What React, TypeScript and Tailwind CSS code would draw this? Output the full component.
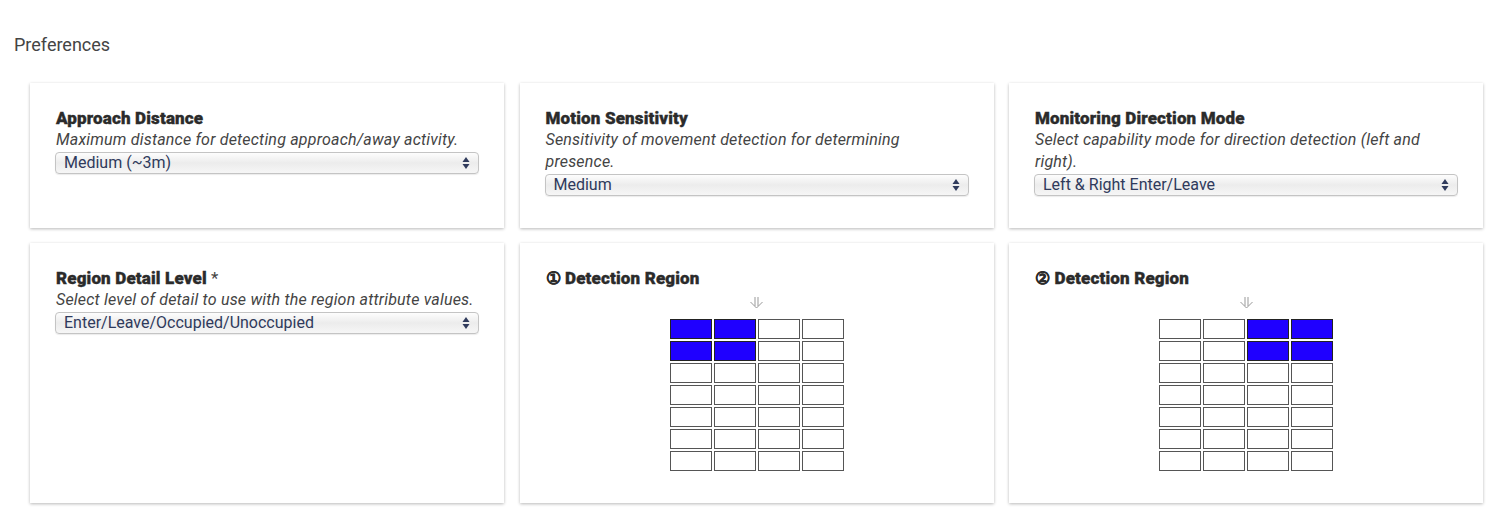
import React from "react";

const font = { fontFamily: "Roboto, 'Liberation Sans', sans-serif" };

function SelectBox({ value }: { value: string }) {
  return (
    <div className="relative mt-[1px] flex h-[22px] w-full items-center rounded-[4px] border border-[#c4c4c4] bg-gradient-to-b from-[#fdfdfd] via-[#ececec] to-[#f6f6f6] pl-[8px] text-[16px] leading-[20px] text-[#2f3a5c] shadow-[0_1px_1px_rgba(0,0,0,0.08)]">
      <span>{value}</span>
      <svg
        className="absolute right-[8px] top-1/2 -translate-y-1/2"
        width="8"
        height="13"
        viewBox="0 0 8 13"
      >
        <path d="M4 0.5 L7.5 5.5 L0.5 5.5 Z" fill="#2f3a5c" />
        <path d="M4 12.5 L7.5 7.5 L0.5 7.5 Z" fill="#2f3a5c" />
      </svg>
    </div>
  );
}

function Card({ children }: { children: React.ReactNode }) {
  return (
    <div className="bg-white pb-[32px] pl-[25px] pr-[25px] pt-[24px] shadow-[0_1px_3px_rgba(0,0,0,0.28)]">
      {children}
    </div>
  );
}

function Title({ children }: { children: React.ReactNode }) {
  return (
    <div className="pl-[1px] text-[17px] font-black leading-[22px] tracking-[0.15px] text-[#2b2b2b] [-webkit-text-stroke:0.35px_#2b2b2b]">
      {children}
    </div>
  );
}

function Desc({ children }: { children: React.ReactNode }) {
  return (
    <div className="pl-[1px] text-[16px] italic leading-[22px] tracking-[0.2px] text-[#444]">{children}</div>
  );
}

function PrefCard({ title, desc, value, req }: { title: string; desc: string; value: string; req?: boolean }) {
  return (
    <Card>
      <Title>
        {title}
        {req && <span className="font-normal text-[#444] [-webkit-text-stroke:0px]"> *</span>}
      </Title>
      <Desc>{desc}</Desc>
      <SelectBox value={value} />
    </Card>
  );
}

function RegionCard({ title, filled }: { title: string; filled: number[] }) {
  const cells = Array.from({ length: 28 }, (_, i) => i);
  return (
    <Card>
      <Title>{title}</Title>
      <div className="flex flex-col items-center">
        <svg className="mt-[8px]" width="15" height="12" viewBox="0 0 15 12">
          <path
            d="M6 0 V9 M9 0 V9 M1.5 5 L7.5 11 L13.5 5"
            fill="none"
            stroke="#999"
            strokeWidth="1"
          />
        </svg>
        <div className="mt-[10px] grid grid-cols-4 gap-[2px]">
          {cells.map((i) => (
            <div
              key={i}
              className={
                filled.includes(i)
                  ? "h-[20px] w-[42px] border border-[#222] bg-[#1f00ff]"
                  : "h-[20px] w-[42px] border border-[#555] bg-white"
              }
            />
          ))}
        </div>
      </div>
    </Card>
  );
}

export default function App() {
  return (
    <div className="min-h-[510px] bg-white pb-[7px] pt-[34px]" style={font}>
      <div className="pl-[14px] text-[18px] leading-[22px] text-[#444]">Preferences</div>
      <div className="mt-[27px] grid grid-cols-3 gap-x-[15.5px] gap-y-[15px] pl-[30px] pr-[16px]">
        <PrefCard
          title="Approach Distance"
          desc="Maximum distance for detecting approach/away activity."
          value="Medium (~3m)"
        />
        <PrefCard
          title="Motion Sensitivity"
          desc="Sensitivity of movement detection for determining presence."
          value="Medium"
        />
        <PrefCard
          title="Monitoring Direction Mode"
          desc="Select capability mode for direction detection (left and right)."
          value="Left & Right Enter/Leave"
        />
        <PrefCard
          title="Region Detail Level"
          req
          desc="Select level of detail to use with the region attribute values."
          value="Enter/Leave/Occupied/Unoccupied"
        />
        <RegionCard title="① Detection Region" filled={[0, 1, 4, 5]} />
        <RegionCard title="② Detection Region" filled={[2, 3, 6, 7]} />
      </div>
    </div>
  );
}
